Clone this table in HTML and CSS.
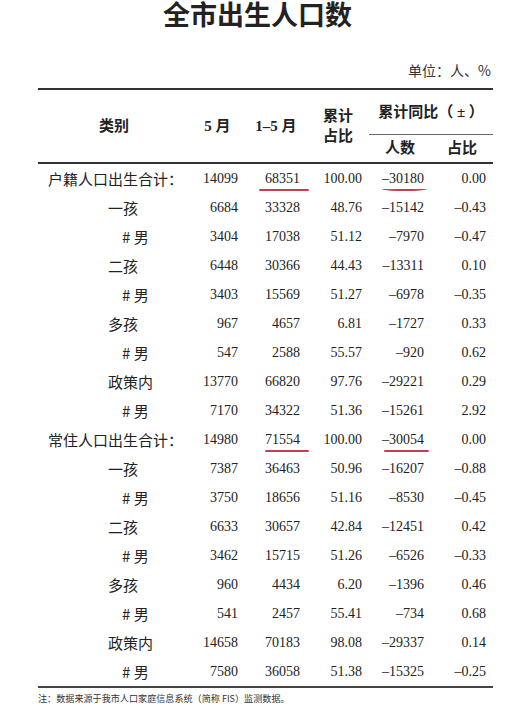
FILE: index.html
```html
<!DOCTYPE html>
<html lang="zh-CN">
<head>
<meta charset="utf-8">
<title>全市出生人口数</title>
<link rel="stylesheet" href="styles.css">
</head>
<body>
<div class="page">
  <h1 class="title">全市出生人口数</h1>
  <div class="unit">单位：人、%</div>
  <table class="data">
    <colgroup>
      <col class="c-label"><col class="c-num1"><col class="c-num"><col class="c-num"><col class="c-num"><col class="c-num">
    </colgroup>
    <thead>
      <tr class="h1">
        <th rowspan="2">类别</th>
        <th rowspan="2">5 月</th>
        <th rowspan="2">1–5 月</th>
        <th rowspan="2" class="two">累计<br>占比</th>
        <th colspan="2" class="group">累计同比（ ± ）</th>
      </tr>
      <tr class="h2">
        <th>人数</th>
        <th>占比</th>
      </tr>
    </thead>
    <tbody>
      <tr><td class="l0">户籍人口出生合计：</td><td>14099</td><td><span class="mark m1">68351</span></td><td>100.00</td><td><span class="mark m2">–30180</span></td><td>0.00</td></tr>
      <tr><td class="l1">一孩</td><td>6684</td><td>33328</td><td>48.76</td><td>–15142</td><td>–0.43</td></tr>
      <tr><td class="l2"># 男</td><td>3404</td><td>17038</td><td>51.12</td><td>–7970</td><td>–0.47</td></tr>
      <tr><td class="l1">二孩</td><td>6448</td><td>30366</td><td>44.43</td><td>–13311</td><td>0.10</td></tr>
      <tr><td class="l2"># 男</td><td>3403</td><td>15569</td><td>51.27</td><td>–6978</td><td>–0.35</td></tr>
      <tr><td class="l1">多孩</td><td>967</td><td>4657</td><td>6.81</td><td>–1727</td><td>0.33</td></tr>
      <tr><td class="l2"># 男</td><td>547</td><td>2588</td><td>55.57</td><td>–920</td><td>0.62</td></tr>
      <tr><td class="l1">政策内</td><td>13770</td><td>66820</td><td>97.76</td><td>–29221</td><td>0.29</td></tr>
      <tr><td class="l2"># 男</td><td>7170</td><td>34322</td><td>51.36</td><td>–15261</td><td>2.92</td></tr>
      <tr><td class="l0">常住人口出生合计：</td><td>14980</td><td><span class="mark m3">71554</span></td><td>100.00</td><td><span class="mark m4">–30054</span></td><td>0.00</td></tr>
      <tr><td class="l1">一孩</td><td>7387</td><td>36463</td><td>50.96</td><td>–16207</td><td>–0.88</td></tr>
      <tr><td class="l2"># 男</td><td>3750</td><td>18656</td><td>51.16</td><td>–8530</td><td>–0.45</td></tr>
      <tr><td class="l1">二孩</td><td>6633</td><td>30657</td><td>42.84</td><td>–12451</td><td>0.42</td></tr>
      <tr><td class="l2"># 男</td><td>3462</td><td>15715</td><td>51.26</td><td>–6526</td><td>–0.33</td></tr>
      <tr><td class="l1">多孩</td><td>960</td><td>4434</td><td>6.20</td><td>–1396</td><td>0.46</td></tr>
      <tr><td class="l2"># 男</td><td>541</td><td>2457</td><td>55.41</td><td>–734</td><td>0.68</td></tr>
      <tr><td class="l1">政策内</td><td>14658</td><td>70183</td><td>98.08</td><td>–29337</td><td>0.14</td></tr>
      <tr><td class="l2"># 男</td><td>7580</td><td>36058</td><td>51.38</td><td>–15325</td><td>–0.25</td></tr>
    </tbody>
  </table>
  <p class="note">注：数据来源于我市人口家庭信息系统（简称 FIS）监测数据。</p>
</div>
</body>
</html>
```
FILE: styles.css
```css
html, body {
  margin: 0;
  padding: 0;
  background: #ffffff;
}
body {
  color: #1c1c1c;
  font-family: "Liberation Serif", "Noto Sans CJK SC", serif;
}
.page {
  width: 515px;
}
.title {
  margin: 0;
  padding-top: 1px;
  height: 30px;
  line-height: 30px;
  text-align: center;
  font-family: "Liberation Serif", "Noto Sans CJK SC", serif;
  font-size: 27px;
  font-weight: 700;
  color: #222;
}
.unit {
  margin-top: 29px;
  height: 20px;
  line-height: 20px;
  padding-right: 24px;
  text-align: right;
  font-family: "Noto Sans CJK SC", sans-serif;
  font-size: 14px;
  color: #333;
}
.data {
  margin: 8px 0 0 38px;
  width: 454px;
  border-collapse: collapse;
  table-layout: fixed;
  border-top: 2px solid #333;
  border-bottom: 2px solid #444;
}
.c-label { width: 152px; }
.c-num1 { width: 55px; }
.c-num { width: 62px; }
.data th {
  padding: 0;
  font-family: "Liberation Serif", "Noto Sans CJK SC", serif;
  font-size: 15px;
  font-weight: 700;
  text-align: center;
  vertical-align: middle;
  line-height: 20px;
  color: #222;
}
.data thead {
  border-bottom: 2px solid #333;
}
.data .h1 { height: 45px; }
.data .h2 { height: 29px; }
.data th.group {
  border-bottom: 1px solid #666;
}
.data td {
  height: 29px;
  padding: 0 7px 0 0;
  text-align: right;
  vertical-align: middle;
  font-size: 14px;
  line-height: 16px;
  color: #222;
}
.data td.l0, .data td.l1, .data td.l2 {
  text-align: left;
  font-family: "Noto Sans CJK SC", sans-serif;
  font-size: 15px;
}
.data td.l0 { padding-left: 10px; }
.data td.l1 { padding-left: 70px; }
.data td.l2 { padding-left: 84px; }
.mark {
  position: relative;
}
.mark::after {
  content: "";
  position: absolute;
  top: calc(100% + 3px);
  height: 2px;
  border-radius: 1px;
  background: #c4404f;
}
.m1::after { left: -6px; right: -9px; }
.m2::after { left: 0; right: -3px; border-radius: 0 0 50% 50% / 0 0 2px 2px; }
.m3::after { left: 0; right: -9px; }
.m4::after { left: 2px; right: -5px; }
.note {
  margin: 3px 0 0 38px;
  font-family: "Noto Sans CJK SC", sans-serif;
  font-size: 9.1px;
  line-height: 14px;
  color: #333;
}
```
